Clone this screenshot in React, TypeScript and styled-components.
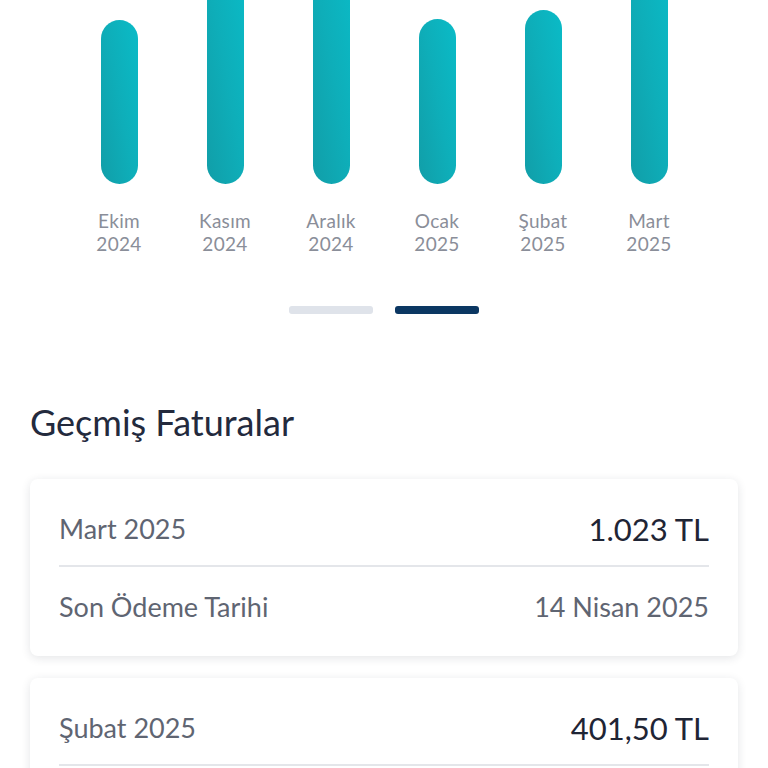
import React from "react";
import styled, { createGlobalStyle } from "styled-components";

const GlobalStyle = createGlobalStyle`
  html, body {
    margin: 0;
    padding: 0;
    background: #ffffff;
  }

  body {
    font-family: "Lato", "Noto Sans", sans-serif;
    -webkit-font-smoothing: antialiased;
  }
`;

interface IMonthUsage {
  month: string;
  year: string;
  height: number;
}

interface IInvoice {
  id: number;
  period: string;
  amount: string;
  dueDate: string;
}

const usage: IMonthUsage[] = [
  { month: "Ekim", year: "2024", height: 164 },
  { month: "Kasım", year: "2024", height: 230 },
  { month: "Aralık", year: "2024", height: 240 },
  { month: "Ocak", year: "2025", height: 165 },
  { month: "Şubat", year: "2025", height: 174 },
  { month: "Mart", year: "2025", height: 236 },
];

const invoices: IInvoice[] = [
  { id: 1, period: "Mart 2025", amount: "1.023 TL", dueDate: "14 Nisan 2025" },
  { id: 2, period: "Şubat 2025", amount: "401,50 TL", dueDate: "14 Mart 2025" },
];

const Page = styled.div`
  width: 768px;
  height: 768px;
  overflow: hidden;
  background: #ffffff;
`;

const Chart = styled.div`
  display: grid;
  grid-template-columns: repeat(6, 1fr);
  padding: 0 66px;
`;

const Column = styled.div`
  display: flex;
  flex-direction: column;
  align-items: center;
`;

const BarTrack = styled.div`
  height: 184px;
  display: flex;
  align-items: flex-end;
  overflow: hidden;
`;

const Bar = styled.div<{ $height: number }>`
  width: 37px;
  height: ${p => p.$height}px;
  border-radius: 19px;
  background: linear-gradient(80deg, #119ea8 0%, #0eaeb9 50%, #0abbc7 100%);
`;

const MonthLabel = styled.div`
  margin-top: 25px;
  font-size: 19px;
  line-height: 23px;
  color: #8a8e99;
  text-align: center;
  letter-spacing: 0.3px;
`;

const Pager = styled.div`
  display: flex;
  justify-content: center;
  gap: 22px;
  margin-top: 51px;
`;

const PagerDot = styled.div<{ $active?: boolean }>`
  width: 84px;
  height: 8px;
  border-radius: 3px;
  background: ${p => (p.$active ? "#0b3762" : "#dfe3ea")};
`;

const Section = styled.section`
  padding: 0 30px;
`;

const Title = styled.h2`
  margin: 86px 0 0;
  font-size: 36px;
  line-height: 44px;
  font-weight: 400;
  color: #232a3d;
`;

const CardList = styled.div`
  display: flex;
  flex-direction: column;
  gap: 22px;
  margin-top: 35px;
`;

const Card = styled.div`
  background: #ffffff;
  border-radius: 8px;
  padding: 0 29px;
  box-shadow: 0 2px 10px rgba(30, 40, 60, 0.12);
`;

const AmountRow = styled.div`
  display: flex;
  justify-content: space-between;
  align-items: center;
  height: 88px;
  padding-top: 13px;
  box-sizing: border-box;
  border-bottom: 2px solid #e4e6ea;
`;

const DueRow = styled.div`
  display: flex;
  justify-content: space-between;
  align-items: center;
  height: 89px;
  padding-bottom: 11px;
  box-sizing: border-box;
`;

const Label = styled.span`
  font-size: 27px;
  color: #5f6572;
`;

const Amount = styled.span`
  font-size: 31px;
  color: #1f2535;
`;

const DueDate = styled.span`
  font-size: 27px;
  color: #5f6572;
`;

const App = () => {
  return (
    <Page>
      <GlobalStyle />
      <Chart>
        {usage.map(item => (
          <Column key={item.month}>
            <BarTrack>
              <Bar $height={item.height} />
            </BarTrack>
            <MonthLabel>
              {item.month}
              <br />
              {item.year}
            </MonthLabel>
          </Column>
        ))}
      </Chart>

      <Pager>
        <PagerDot />
        <PagerDot $active />
      </Pager>

      <Section>
        <Title>Geçmiş Faturalar</Title>
        <CardList>
          {invoices.map(invoice => (
            <Card key={invoice.id}>
              <AmountRow>
                <Label>{invoice.period}</Label>
                <Amount>{invoice.amount}</Amount>
              </AmountRow>
              <DueRow>
                <Label>Son Ödeme Tarihi</Label>
                <DueDate>{invoice.dueDate}</DueDate>
              </DueRow>
            </Card>
          ))}
        </CardList>
      </Section>
    </Page>
  );
};

export default App;
